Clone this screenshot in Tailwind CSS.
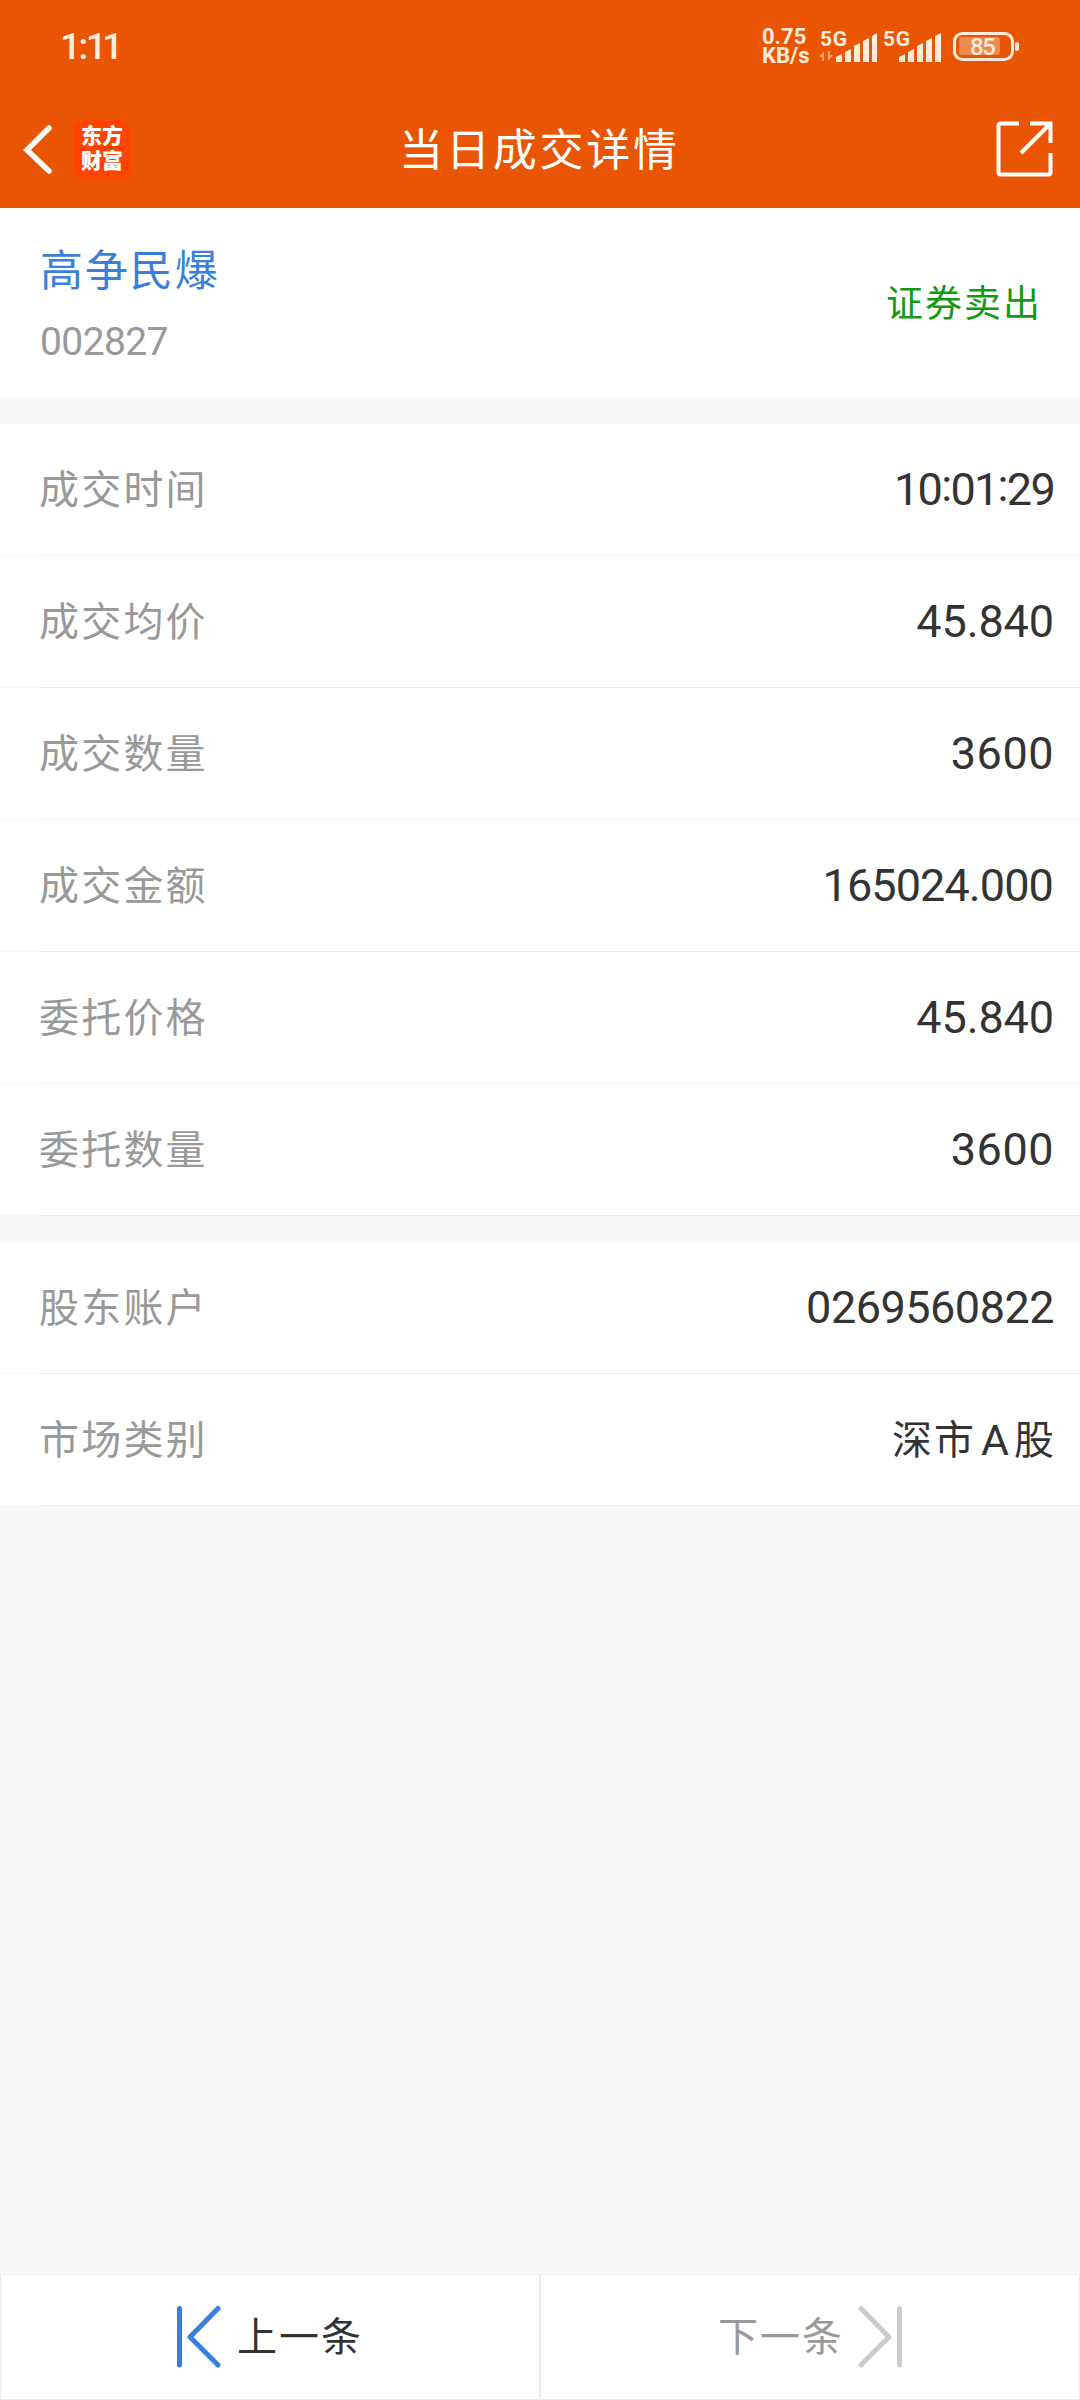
<!DOCTYPE html>
<html lang="zh-CN">
<head>
    <meta charset="UTF-8">
    <meta name="viewport" content="width=device-width, initial-scale=1.0">
    <title>当日成交详情</title>
    <script src="https://cdn.jsdelivr.net/npm/@tailwindcss/browser@4"></script>
</head>
<body class="bg-[#f7f8fa] font-[Roboto,'Noto_Sans_CJK_SC',sans-serif] text-[#333333]">
    <div class="flex flex-col w-[1080px] h-[2400px] overflow-hidden">
        <header class="h-[208px] bg-[#ea5504] text-white shrink-0">
            <!-- Status bar -->
            <div class="flex items-center h-[92px] pl-[60px] pr-[60px] text-[#ffecdc]">
                <span class="text-[37px] leading-none font-medium tracking-[-4.5px]">1<span class="px-[2px]">:</span>11</span>
                <div class="ml-auto w-[49px] text-[22px] leading-[19px] font-bold whitespace-nowrap">
                    <div>0.75</div>
                    <div>KB/s</div>
                </div>
                <svg class="ml-[8px]" width="122" height="36" viewBox="819 26 122 36" fill="#ffecdc">
                    <text x="820" y="44" font-size="21" font-weight="700" textLength="27">5G</text>
                    <path d="M819 55l5-6v10h-2v-4zM828 49v10l5-6h-3v-4z" opacity=".5"/>
                    <path d="M836 55l6-3v8h-6zM845 50l6-3v13h-6zM854 44l6-3v19h-6zM863 39l6-3v24h-6zM872 34l5-3v29h-5z"/>
                    <text x="883" y="44" font-size="21" font-weight="700" textLength="27">5G</text>
                    <path d="M899 55l6-3v8h-6zM908 50l6-3v13h-6zM917 44l6-3v19h-6zM926 39l6-3v24h-6zM935 34l6-3v29h-6z"/>
                </svg>
                <svg class="ml-[12px]" width="67" height="36" viewBox="953 27 67 36">
                    <rect x="954.5" y="32.5" width="58" height="26" rx="8" fill="none" stroke="#ffecdc" stroke-width="3"/>
                    <rect x="959" y="36" width="41" height="18" rx="3" fill="#f08a50"/>
                    <rect x="1015" y="41" width="4" height="9" rx="2" fill="#ffecdc"/>
                    <text x="970" y="54" font-size="24" font-weight="500" fill="#ffecdc" textLength="26">85</text>
                </svg>
            </div>
            <!-- Title bar -->
            <div class="flex items-center h-[114px] pl-[23px] pr-[27px]">
                <svg width="30" height="50" viewBox="0 0 30 50" fill="none" stroke="#fff" stroke-width="5.5" stroke-linecap="round">
                    <path d="M26 4L4 26 26 47"/>
                </svg>
                <div class="flex flex-col items-center justify-center ml-[20px] w-[58px] h-[59px] rounded-xl bg-[#ff4400] text-[21px] leading-[25px] font-black">
                    <div>东方</div>
                    <div>财富</div>
                </div>
                <h1 class="flex-1 text-center pt-[3px] pl-[1px] text-[44px] leading-none tracking-[2.8px]">当日成交详情</h1>
                <svg class="ml-[48px] mb-[2px]" width="58" height="58" viewBox="0 0 58 58" fill="none" stroke="#fff" stroke-width="4">
                    <path d="M24 4.500H6Q3.500 4.500 3.500 7V53Q3.500 55.500 6 55.500H53Q55.500 55.500 55.500 53V34"/>
                    <path d="M35 4.500H55.500V24M55 5L26 34"/>
                </svg>
            </div>
        </header>

        <!-- Stock -->
        <section class="flex items-center justify-between h-[190px] bg-white pl-[40px] pr-[39px] shrink-0">
            <div class="pt-[4px]">
                <div class="text-[43px] leading-[56px] tracking-[1.9px] text-[#3a7fd8]">高争民爆</div>
                <div class="mt-[17px] text-[39px] leading-[52px] tracking-[-0.600px] text-[#999999]">002827</div>
            </div>
            <div class="pt-[2px] -mr-[1px] text-[37px] leading-none tracking-[2px] text-[#129a12]">证券卖出</div>
        </section>

        <!-- Trade details -->
        <section class="mt-[26px] bg-white shrink-0">
            <div class="relative flex items-center justify-between h-[132px] pl-[39px] pr-[26px] border-b border-[#ebebed] before:absolute before:left-0 before:-bottom-px before:w-[39px] before:h-px before:bg-[#f7f8fa]">
                <span class="pt-[2px] text-[40px] tracking-[2.200px] text-[#999999]">成交时间</span>
                <span class="text-[45px] tracking-[-1.700px]">10<span class="relative -top-[4px]">:</span>01<span class="relative -top-[4px]">:</span>29</span>
            </div>
            <div class="relative flex items-center justify-between h-[132px] pl-[39px] pr-[26px] border-b border-[#ebebed] before:absolute before:left-0 before:-bottom-px before:w-[39px] before:h-px before:bg-[#f7f8fa]">
                <span class="pt-[2px] text-[40px] tracking-[2.200px] text-[#999999]">成交均价</span>
                <span class="text-[45px] tracking-[-0.100px]">45.840</span>
            </div>
            <div class="relative flex items-center justify-between h-[132px] pl-[39px] pr-[26px] border-b border-[#ebebed] before:absolute before:left-0 before:-bottom-px before:w-[39px] before:h-px before:bg-[#f7f8fa]">
                <span class="pt-[2px] text-[40px] tracking-[2.200px] text-[#999999]">成交数量</span>
                <span class="text-[45px] tracking-[0.500px]">3600</span>
            </div>
            <div class="relative flex items-center justify-between h-[132px] pl-[39px] pr-[26px] border-b border-[#ebebed] before:absolute before:left-0 before:-bottom-px before:w-[39px] before:h-px before:bg-[#f7f8fa]">
                <span class="pt-[2px] text-[40px] tracking-[2.200px] text-[#999999]">成交金额</span>
                <span class="pr-[1px] text-[45px] tracking-[-0.900px]">165024.000</span>
            </div>
            <div class="relative flex items-center justify-between h-[132px] pl-[39px] pr-[26px] border-b border-[#ebebed] before:absolute before:left-0 before:-bottom-px before:w-[39px] before:h-px before:bg-[#f7f8fa]">
                <span class="pt-[2px] text-[40px] tracking-[2.200px] text-[#999999]">委托价格</span>
                <span class="text-[45px] tracking-[-0.100px]">45.840</span>
            </div>
            <div class="relative flex items-center justify-between h-[132px] pl-[39px] pr-[26px] border-b border-[#ebebed] before:absolute before:left-0 before:-bottom-px before:w-[39px] before:h-px before:bg-[#f7f8fa]">
                <span class="pt-[2px] text-[40px] tracking-[2.200px] text-[#999999]">委托数量</span>
                <span class="text-[45px] tracking-[0.500px]">3600</span>
            </div>
        </section>

        <!-- Account -->
        <section class="mt-[26px] bg-white shrink-0">
            <div class="relative flex items-center justify-between h-[132px] pl-[39px] pr-[26px] border-b border-[#ebebed] before:absolute before:left-0 before:-bottom-px before:w-[39px] before:h-px before:bg-[#f7f8fa]">
                <span class="pt-[2px] text-[40px] tracking-[2.200px] text-[#999999]">股东账户</span>
                <span class="text-[45px] tracking-[-0.500px]">0269560822</span>
            </div>
            <div class="relative flex items-center justify-between h-[132px] pl-[39px] pr-[24px] border-b border-[#ebebed] before:absolute before:left-0 before:-bottom-px before:w-[39px] before:h-px before:bg-[#f7f8fa]">
                <span class="flex items-center pt-[2px] text-[40px] tracking-[2.200px] text-[#999999]">市场类别</span>
                <span class="flex items-center pt-[2px] text-[40px] tracking-[2px]">深市<span class="px-[5px] text-[43px] tracking-normal">A</span>股</span>
            </div>
        </section>

        <!-- Prev / next -->
        <footer class="grid grid-cols-[540px_1fr] mt-auto h-[126px] bg-white border border-[#ebebed] shrink-0">
            <div class="flex items-center pl-[175px] border-r-2 border-[#ebebed]">
                <svg width="46" height="64" viewBox="0 0 46 64" fill="none" stroke="#3a7fd8" stroke-width="5" stroke-linecap="round" stroke-linejoin="round">
                    <path d="M3.500 3.500V60M42 3.500L14 32 42 60"/>
                </svg>
                <span class="ml-[15px] pt-[2px] text-[40px] tracking-[2px]">上一条</span>
            </div>
            <div class="flex items-center pl-[177px] text-[#999999]">
                <span class="pt-[2px] text-[40px] tracking-[2px]">下一条</span>
                <svg class="ml-[13px]" width="46" height="64" viewBox="0 0 46 64" fill="none" stroke="#cccccc" stroke-width="5" stroke-linecap="round" stroke-linejoin="round">
                    <path d="M42.500 3.500V60M4 3.500L32 32 4 60"/>
                </svg>
            </div>
        </footer>
    </div>
</body>
</html>
